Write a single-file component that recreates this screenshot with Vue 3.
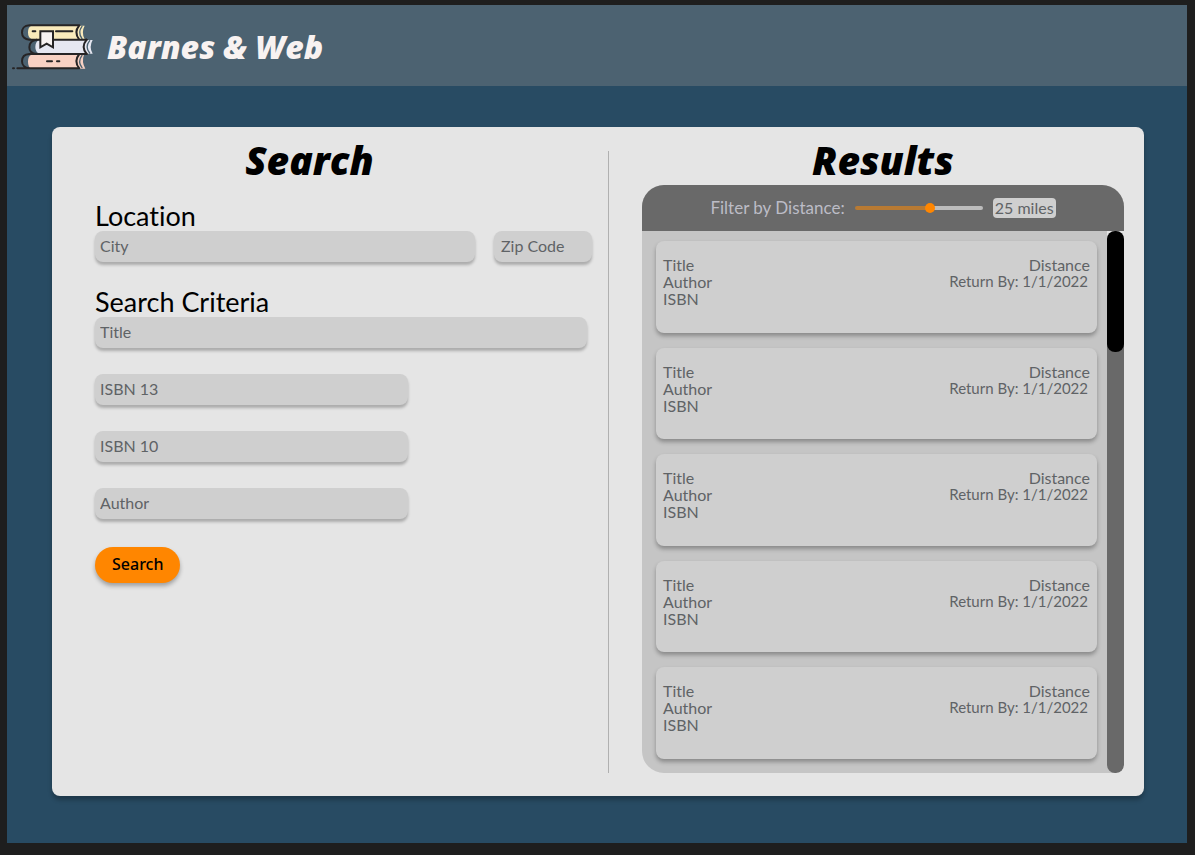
<script setup>
import { ref, computed } from 'vue'

const miles = ref(25)
const maxMiles = 42
const fill = computed(() => `${(miles.value / maxMiles) * 100}%`)

const results = Array.from({ length: 5 }, (_, id) => ({
  id,
  title: 'Title',
  author: 'Author',
  isbn: 'ISBN',
  distance: 'Distance',
  returnBy: 'Return By: 1/1/2022',
}))
</script>

<template>
  <div class="frame">
    <header class="topbar">
      <svg class="logo" viewBox="36 66 246 144" fill="none" stroke="#262425" stroke-width="6" stroke-linecap="round" stroke-linejoin="round" aria-hidden="true">
        <g stroke="none">
          <path fill="#f9eabb" d="M94 74H254Q243 94 254 114H94Q84 110 84 94T94 74Z" />
          <path fill="#e6e7f1" d="M118 117H278Q266 138 278 158H118Q106 154 106 138T118 117Z" />
          <path fill="#f8d1c3" d="M94 161H252Q244 182 256 203H94Q84 198 84 182T94 161Z" />
        </g>
        <path stroke="#4b6271" stroke-width="4" d="M246 76Q232 94 246 113M269 119Q254 138 269 156M246 163Q232 182 246 200" />
        <path d="M238 73H88C72 73 66 84 66 95S74 116 88 116H260M238 73Q220 94 238 116" />
        <path d="M110 116C95 118 88 128 88 139S96 158 110 159M260 116Q242 138 260 159" />
        <path d="M260 159H88C72 160 66 170 66 181S74 201 88 202M52 202H238Q220 181 238 159M39 202H42" />
        <path d="M98 91H106M168 91H217M141 181H156M171 181H178" />
        <path fill="#f8f3f2" stroke-linejoin="miter" d="M121 91H159V139L140 128L121 139Z" />
      </svg>
      <h1>Barnes &amp; Web</h1>
    </header>

    <main class="stage">
      <div class="panel">
        <section class="search">
          <h2>Search</h2>
          <form @submit.prevent>
            <fieldset>
              <legend>Location</legend>
              <div class="row">
                <input class="city" type="text" placeholder="City" aria-label="City" />
                <input class="zip" type="text" placeholder="Zip Code" aria-label="Zip Code" />
              </div>
            </fieldset>
            <fieldset>
              <legend>Search Criteria</legend>
              <div class="criteria">
                <input class="wide" type="text" placeholder="Title" aria-label="Title" />
                <input type="text" placeholder="ISBN 13" aria-label="ISBN 13" />
                <input type="text" placeholder="ISBN 10" aria-label="ISBN 10" />
                <input type="text" placeholder="Author" aria-label="Author" />
              </div>
            </fieldset>
            <button type="submit">Search</button>
          </form>
        </section>

        <section class="results">
          <h2>Results</h2>
          <div class="box">
            <div class="filter">
              <label for="distance">Filter by Distance:</label>
              <input id="distance" v-model.number="miles" type="range" min="0" :max="maxMiles" :style="{ '--fill': fill }" />
              <output for="distance">{{ miles }} miles</output>
            </div>
            <div class="scroller">
              <ul>
                <li v-for="book in results" :key="book.id">
                  <div>
                    <p>{{ book.title }}</p>
                    <p>{{ book.author }}</p>
                    <p>{{ book.isbn }}</p>
                  </div>
                  <div class="right">
                    <p>{{ book.distance }}</p>
                    <p class="due">{{ book.returnBy }}</p>
                  </div>
                </li>
              </ul>
              <div class="track"><div class="thumb"></div></div>
            </div>
          </div>
        </section>
      </div>
    </main>
  </div>
</template>

<style>
body {
  background: #1e1e1e;
}
</style>

<style scoped>
* {
  box-sizing: border-box;
  margin: 0;
}
.frame {
  min-height: 100vh;
  padding: 5px 8px 12px 7px;
  background: #1e1e1e;
  display: flex;
  flex-direction: column;
  font-family: Lato, "Liberation Sans", sans-serif;
  font-size: 16px;
  font-variant-ligatures: none;
}
.topbar {
  display: flex;
  align-items: center;
  gap: 13px;
  height: 81px;
  padding: 2px 5px 0;
  background: #4c6271;
}
.logo {
  width: 82px;
  height: 48px;
}
h1,
h2 {
  font-family: "Open Sans", Lato, sans-serif;
  font-weight: 800;
  font-style: italic;
}
h1 {
  color: #f8f2f1;
  font-size: 32px;
  line-height: 40px;
}
.stage {
  flex: 1;
  display: flex;
  padding: 41px 43px 47px 45px;
  background: #284b63;
}
.panel {
  flex: 1;
  display: grid;
  grid-template-columns: 557fr 535fr;
  padding: 24px 0 23px;
  border-radius: 8px;
  background: #e5e5e5;
  box-shadow: 0 4px 4px rgba(0, 0, 0, 0.25);
}
h2 {
  height: 34px;
  font-size: 39px;
  line-height: 18px;
  text-align: center;
  color: #000;
}
.search {
  padding: 0 16px 0 43px;
  border-right: 1px solid #b0b0b0;
}
.search h2 {
  margin: 0 68px 0 0;
}
form {
  padding-top: 17px;
}
fieldset {
  border: 0;
  padding: 0;
  margin-bottom: 26px;
  min-width: 0;
}
fieldset + fieldset {
  margin-bottom: 28px;
}
legend {
  padding: 0;
  font-size: 27px;
  line-height: 28px;
  height: 29px;
  color: #000;
}
.row {
  display: flex;
  gap: 19px;
}
.criteria {
  display: grid;
  gap: 26px;
}
input[type="text"] {
  width: 63%;
  height: 31px;
  padding: 0 5px 3px;
  border: 0;
  border-radius: 8px;
  background: #cfcfcf;
  box-shadow: 0 3px 3px rgba(0, 0, 0, 0.25);
  font: inherit;
  color: #5f6366;
}
input::placeholder {
  color: #5f6366;
  opacity: 1;
}
input[type="text"].city {
  flex: 1;
  min-width: 0;
}
input[type="text"].zip {
  width: 98px;
  padding-left: 7px;
}
input[type="text"].wide {
  width: 99%;
}
button {
  height: 36px;
  padding: 0 17px 2px;
  border: 0;
  border-radius: 18px;
  background: #ff8600;
  box-shadow: 0 3px 4px rgba(0, 0, 0, 0.3);
  font: 500 16px "Noto Sans", sans-serif;
  color: #000;
}
.results {
  display: flex;
  flex-direction: column;
  padding: 0 20px 0 33px;
}
.box {
  flex: 1;
  display: flex;
  flex-direction: column;
  border-radius: 22px 22px 8px 22px;
  overflow: hidden;
  background: #c5c5c5;
}
.filter {
  display: flex;
  align-items: center;
  justify-content: center;
  gap: 10px;
  height: 46px;
  background: #696969;
  color: #bcbcc6;
}
.filter label {
  font-size: 17px;
  line-height: 20px;
}
.filter input {
  appearance: none;
  width: 128px;
  height: 10px;
  margin: 0;
  background: transparent;
}
.filter input::-webkit-slider-runnable-track {
  height: 4px;
  border-radius: 2px;
  background: linear-gradient(to right, #b87a33 var(--fill), #bcbcbc var(--fill));
}
.filter input::-webkit-slider-thumb {
  appearance: none;
  width: 10px;
  height: 10px;
  margin-top: -3px;
  border-radius: 50%;
  background: #ff8600;
}
.filter output {
  padding: 0 2px;
  border-radius: 4px;
  background: #cfcfcf;
  color: #5f6366;
  line-height: 20px;
}
.scroller {
  flex: 1;
  display: grid;
  grid-template-columns: 1fr 17px;
  gap: 10px;
}
ul {
  display: flex;
  flex-direction: column;
  gap: 15px;
  padding: 10px 0 14px 14px;
  list-style: none;
}
li {
  flex: 1;
  display: flex;
  justify-content: space-between;
  padding: 15px 7px;
  border-radius: 8px;
  background: #cfcfcf;
  box-shadow: 0 3px 4px rgba(0, 0, 0, 0.3);
  color: #5f6366;
  line-height: 17px;
}
.right {
  text-align: right;
}
.due {
  padding-right: 2px;
  font-size: 15px;
}
.track {
  border-radius: 0 0 8px 8px;
  background: linear-gradient(#e5e5e5 9px, #696969 9px);
}
.thumb {
  height: 121px;
  border-radius: 8px;
  background: #000;
}
</style>
